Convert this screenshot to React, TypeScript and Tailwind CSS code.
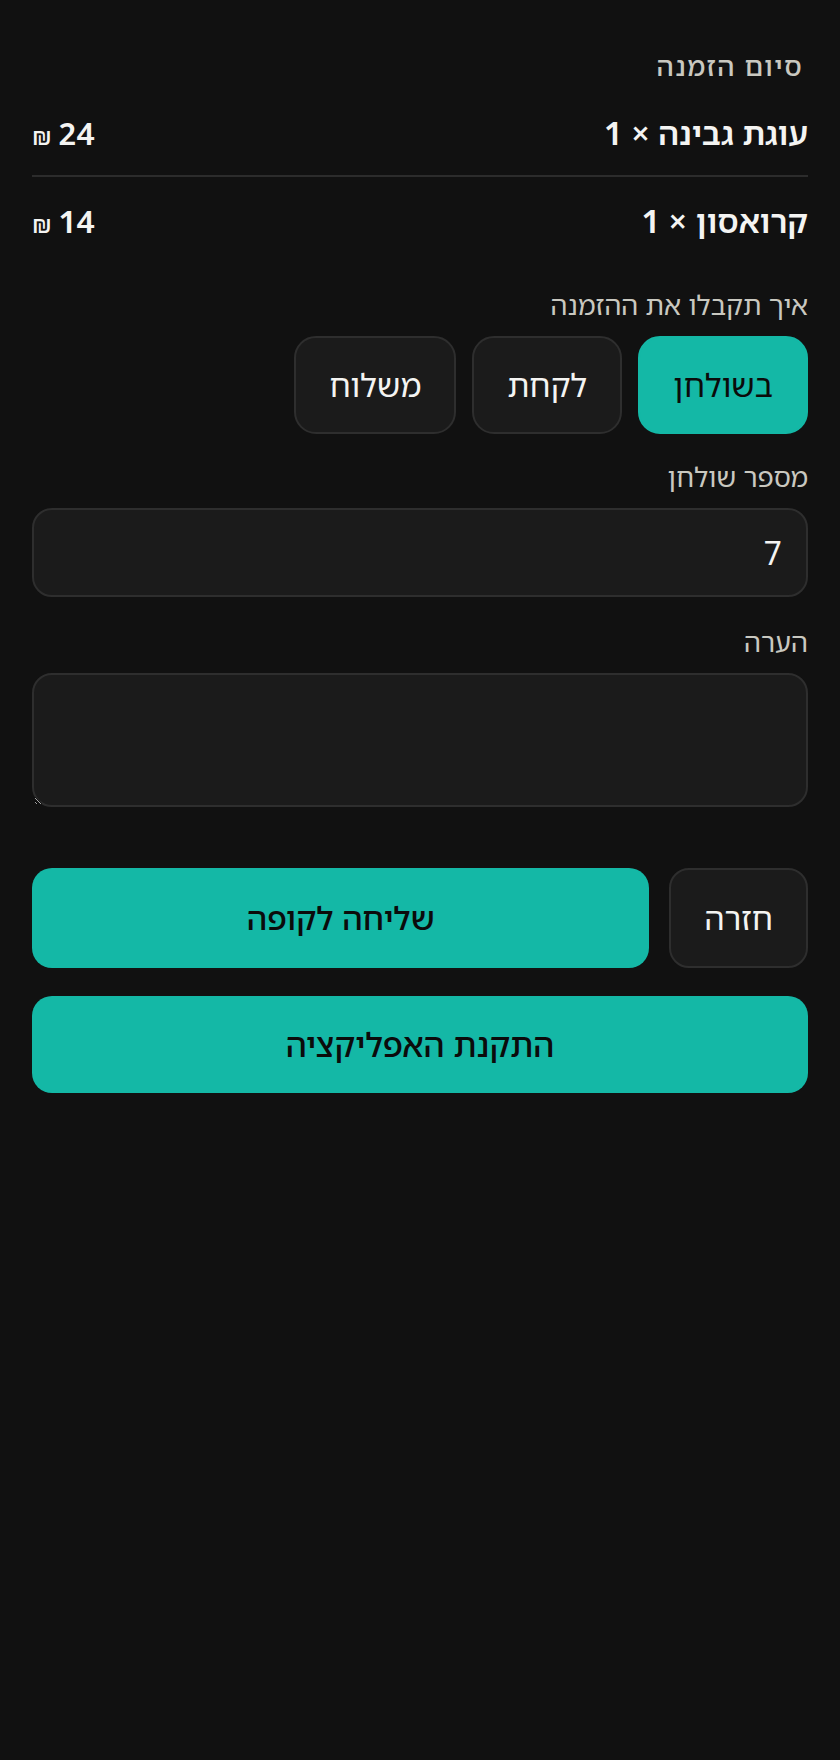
import { useState } from 'react';

const items = [
  { name: 'עוגת גבינה', qty: 1, price: 24 },
  { name: 'קרואסון', qty: 1, price: 14 },
];

const modes = ['בשולחן', 'לקחת', 'משלוח'];

const App = () => {
  const [mode, setMode] = useState('בשולחן');
  const [table, setTable] = useState('7');
  const [note, setNote] = useState('');

  return (
    <div
      dir="rtl"
      className="min-h-screen bg-[#111111] px-8 pt-12 pb-16 text-[#f4f4f2]"
      style={{ fontFamily: '"Noto Sans Hebrew", "Noto Sans", "Open Sans", sans-serif' }}
    >
      <h2 className="pr-[5px] text-[27px] leading-9 font-medium tracking-[1.4px] text-[#c9c8c0]">סיום הזמנה</h2>

      <div className="mt-[7px]">
        {items.map((item, i) => (
          <div
            key={item.name}
            className={
              i === 0
                ? 'flex h-[86px] items-center justify-between border-b-2 border-[#2c2c2c]'
                : 'flex h-[86px] items-center justify-between pt-[2px]'
            }
          >
            <span className="text-[32px] leading-[44px] font-semibold">
              {item.name} × {item.qty}
            </span>
            <span className="flex items-baseline gap-[7px] text-[31px] leading-[44px] font-semibold">
              <span>{item.price}</span>
              <span className="text-[24px] leading-none font-medium">₪</span>
            </span>
          </div>
        ))}
      </div>

      <div className="mt-6 mb-[13px] text-[27px] leading-9 text-[#c9c8c0]">איך תקבלו את ההזמנה</div>
      <div className="flex gap-4">
        {modes.map((m) => (
          <button
            key={m}
            onClick={() => setMode(m)}
            className={
              m === mode
                ? 'h-[98px] px-[33px] rounded-[22px] border-2 border-[#14b8a6] bg-[#14b8a6] text-[32px] text-[#0b0b0b]'
                : 'h-[98px] px-[33px] rounded-[22px] border-2 border-[#2e2e2e] bg-[#1b1b1b] text-[32px] text-[#f4f4f2]'
            }
          >
            {m}
          </button>
        ))}
      </div>

      <div className="mt-[25px] mb-[13px] text-[27px] leading-9 text-[#c9c8c0]">מספר שולחן</div>
      <input
        value={table}
        onChange={(e) => setTable(e.target.value)}
        className="block h-[89px] w-full rounded-[20px] border-2 border-[#2e2e2e] bg-[#1b1b1b] px-6 text-[32px] text-[#f4f4f2] outline-none"
      />

      <div className="mt-[27px] mb-[13px] text-[27px] leading-9 text-[#c9c8c0]">הערה</div>
      <textarea
        value={note}
        onChange={(e) => setNote(e.target.value)}
        className="block h-[134px] w-full rounded-[20px] border-2 border-[#2e2e2e] bg-[#1b1b1b] px-6 py-4 text-[32px] text-[#f4f4f2] outline-none"
      />

      <div className="mt-[61px] flex gap-5">
        <button className="h-[100px] px-[33px] rounded-[20px] border-2 border-[#2e2e2e] bg-[#1b1b1b] text-[32px] text-[#f4f4f2]">
          חזרה
        </button>
        <button className="h-[100px] flex-1 rounded-[20px] bg-[#14b8a6] text-[32px] font-medium text-[#0b0b0b]">
          שליחה לקופה
        </button>
      </div>

      <button className="mt-7 h-[97px] w-full rounded-[20px] bg-[#14b8a6] text-[33px] font-medium text-[#0b0b0b]">
        התקנת האפליקציה
      </button>
    </div>
  );
};

export default App;
